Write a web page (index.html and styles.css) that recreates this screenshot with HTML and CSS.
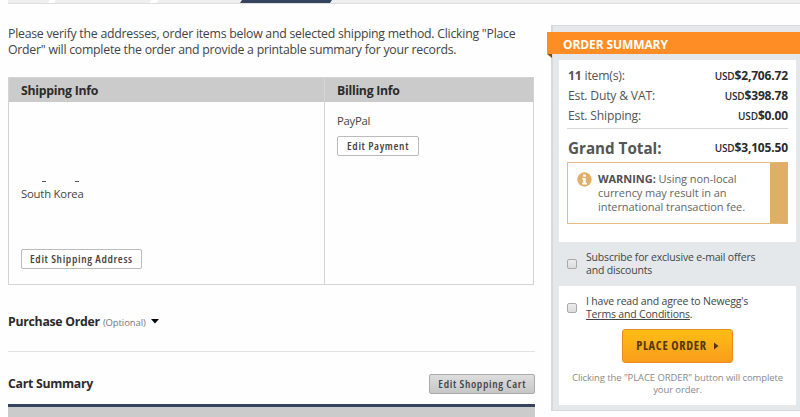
FILE: index.html
```
<!DOCTYPE html>
<html>
<head>
	<meta charset="UTF-8">
	<title>Place Order</title>
	<link rel="stylesheet" href="styles.css">
</head>
<body>
	<nav class="steps">
		<svg width="792" height="4" viewBox="0 0 792 4">
			<path class="step-bg" d="M0 0H792V3H0z"/>
			<path class="step-line" d="M0 3H792V4H0z"/>
			<path class="step-gap" d="M42 0L39 3H46L48 0zM144 0L141 3H148L151 0z"/>
			<path class="step-on" d="M234 0H324L322 3H232z"/>
		</svg>
	</nav>
	<div class="page">
		<main>
			<p class="intro">Please verify the addresses, order items below and selected shipping method. Clicking "Place<br>Order" will complete the order and provide a printable summary for your records.</p>
			<section class="info">
				<div class="shipping">
					<h2>Shipping Info</h2>
					<div class="content">
						<div class="marks"><i></i><i></i></div>
						<p>South Korea</p>
						<a class="btn">Edit Shipping Address</a>
					</div>
				</div>
				<div class="billing">
					<h2>Billing Info</h2>
					<div class="content">
						<p>PayPal</p>
						<a class="btn">Edit Payment</a>
					</div>
				</div>
			</section>
			<section class="purchase">
				<h3>Purchase Order</h3>
				<small>(Optional)</small>
				<svg width="8" height="5" viewBox="0 0 8 5"><path d="M0 0H8L4 4.5z"/></svg>
			</section>
			<section class="cart">
				<h3>Cart Summary</h3>
				<a class="btn grey">Edit Shopping Cart</a>
			</section>
			<div class="cart-table"></div>
		</main>
		<aside class="summary">
			<h2 class="ribbon">ORDER SUMMARY</h2>
			<div class="panel totals">
				<dl>
					<div><dt><b>11</b> item(s):</dt><dd><span>USD</span>$2,706.72</dd></div>
					<div><dt>Est. Duty &amp; VAT:</dt><dd><span>USD</span>$398.78</dd></div>
					<div><dt>Est. Shipping:</dt><dd><span>USD</span>$0.00</dd></div>
					<div class="grand"><dt>Grand Total:</dt><dd><span>USD</span>$3,105.50</dd></div>
				</dl>
				<div class="warning">
					<svg width="15" height="15" viewBox="0 0 15 15">
						<circle cx="7.5" cy="7.5" r="7.2" fill="#e0ae66"/>
						<path d="M6.2 2.4H8.8V4.8H6.2zM5.2 6H8.8V10.7H10V12.4H5V10.7H6.2V7.6H5.2z" fill="#fff"/>
					</svg>
					<p><b>WARNING:</b> Using non-local<br>currency may result in an<br>international transaction fee.</p>
				</div>
			</div>
			<label class="subscribe"><input type="checkbox"><span>Subscribe for exclusive e-mail offers<br>and discounts</span></label>
			<div class="panel order">
				<label><input type="checkbox"><span>I have read and agree to Newegg's<br><a>Terms and Conditions</a>.</span></label>
				<a class="place">PLACE ORDER <svg width="5" height="8" viewBox="0 0 5 8"><path d="M0 0.5L4.5 4L0 7.5z"/></svg></a>
				<p class="note">Clicking the "PLACE ORDER" button will complete<br>your order.</p>
			</div>
		</aside>
	</div>
</body>
</html>
```
FILE: styles.css
```
*{
	box-sizing: border-box;
}
body,h2,h3,p,dl,dd{
	margin: 0;
}
body{
	height: 417px;
	overflow: hidden;
	background: #fefefe;
	color: #444;
	font: 11.3px/16px "Open Sans", sans-serif;
}
svg{
	display: block;
	flex: none;
}
.steps{
	height: 4px;
	padding-left: 8px;
}
.step-bg{fill: #efefef}
.step-line{fill: #dedede}
.step-gap{fill: #fff}
.step-on{fill: #35455f}

.page{
	display: flex;
	gap: 16px;
	width: 812px;
	padding-left: 8px;
}
main{
	width: 527px;
	flex: none;
}
.intro{
	padding-top: 22px;
	font-size: 12.3px;
	letter-spacing: -0.25px;
	white-space: nowrap;
}
h2,h3{
	color: #2b2b2b;
	font-size: 12.3px;
	font-weight: 700;
	letter-spacing: -0.28px;
	white-space: nowrap;
}

/* addresses */
.info{
	display: flex;
	width: 526px;
	height: 208px;
	margin-top: 19px;
	border: 1px solid #d4d4d4;
}
.info h2{
	height: 24px;
	padding: 0 12px;
	background: #cbcbcb;
	line-height: 26px;
}
.shipping{
	width: 316px;
	border-right: 1px solid #d4d4d4;
}
.billing{
	flex: 1;
}
.content{
	padding: 0 12px;
	letter-spacing: -0.2px;
}
.shipping .content{
	padding-top: 79px;
}
.shipping .btn{
	margin-top: 47px;
}
.billing .content{
	padding-top: 11px;
}
.billing .content p{
	letter-spacing: -0.25px;
}
.billing .btn{
	margin-top: 7px;
	padding: 0 9px;
}
.marks{
	display: flex;
	gap: 29px;
	padding: 0 0 4px 21px;
}
.marks i{
	width: 4px;
	height: 1px;
	background: #555;
}
.btn{
	display: inline-block;
	height: 20px;
	padding: 0 8px;
	border: 1px solid #bbb;
	border-radius: 2px;
	background: #fff;
	color: #444;
	font-size: 11.3px;
	font-weight: 600;
	font-stretch: 75%;
	line-height: 18px;
	letter-spacing: 0.65px;
	white-space: nowrap;
	vertical-align: top;
}
.btn.grey{
	border-color: #aaa;
	background: linear-gradient(#dedede, #c6c6c6);
}

.purchase{
	display: flex;
	align-items: center;
	height: 67px;
	padding-top: 7px;
	border-bottom: 1px solid #e2e2e2;
}
.purchase small{
	margin: 2px 5px 0 3px;
	color: #777;
	font-size: 9.5px;
	letter-spacing: -0.1px;
}
.cart{
	display: flex;
	justify-content: space-between;
	align-items: center;
	height: 52px;
	padding-top: 11px;
}
.cart-table{
	height: 13px;
	border-top: 3px solid #35455f;
	background: #cbcbcb;
}

/* order summary */
.summary{
	width: 260px;
	height: 386px;
	margin-top: 21px;
	padding: 6px 6px;
	border: 1px solid #d5d9db;
	border-left-width: 2px;
	background: #e4e8eb;
}
.ribbon{
	position: relative;
	width: 264px;
	height: 22px;
	margin-left: -12px;
	padding-left: 16px;
	background: #fd8d24;
	color: #fff;
	font-size: 12px;
	line-height: 25px;
	letter-spacing: -0.1px;
}
.ribbon:after{
	content: "";
	position: absolute;
	top: 22px; left: 0;
	border-top: 4px solid #8a4a0c;
	border-left: 5px solid transparent;
}
.panel{
	width: 237px;
	padding: 0 8px;
	background: #fff;
}
.totals{
	height: 182px;
	margin-top: 6px;
	padding-top: 6px;
}
dl>div{
	display: flex;
	justify-content: space-between;
	align-items: center;
	height: 20px;
	padding-left: 1px;
	white-space: nowrap;
}
dt{
	font-size: 12.2px;
	letter-spacing: -0.2px;
	color: #555;
}
dd{
	color: #2b2b2b;
	font-size: 12px;
	font-weight: 700;
	letter-spacing: -0.15px;
}
dd span{
	font-size: 10px;
	font-weight: 600;
}
dl .grand{
	height: 38px;
	margin-top: 2px;
	border-top: 1px solid #d8d8d8;
}
.grand dt{
	font-size: 15.2px;
	font-weight: 700;
	letter-spacing: 0;
}
.warning{
	display: flex;
	gap: 6px;
	height: 62px;
	margin-top: -4px;
	padding: 9px 0 0 9px;
	border: 1px solid #e6be85;
	border-right: 18px solid #e0ae66;
}
.warning p{
	color: #666;
	font-size: 11px;
	line-height: 14px;
	letter-spacing: -0.05px;
	white-space: nowrap;
}
.warning b{
	color: #505050;
}
label{
	display: flex;
	align-items: center;
	font-size: 10.5px;
	line-height: 13px;
	letter-spacing: -0.18px;
	white-space: nowrap;
}
input{
	appearance: none;
	flex: none;
	width: 10px;
	height: 10px;
	margin: 0 9px 0 0;
	border: 1px solid #aaa;
	border-radius: 2px;
	background: linear-gradient(#ececec, #dcdcdc);
}
.subscribe{
	height: 44px;
	padding: 0 0 1px 8px;
}
.order{
	height: 119px;
	padding-top: 9px;
}
.order a{
	text-decoration: underline;
}
.order .place{
	display: flex;
	align-items: center;
	justify-content: center;
	gap: 7px;
	width: 111px;
	height: 34px;
	margin: 8px 0 0 55px;
	border: 1px solid #ec8a22;
	border-radius: 3px;
	background: linear-gradient(#fdbd14, #f99d1c);
	color: #54370a;
	fill: #54370a;
	font-size: 12.3px;
	font-weight: 700;
	font-stretch: 75%;
	letter-spacing: 0.7px;
	text-decoration: none;
	white-space: nowrap;
}
.note{
	margin-top: 9px;
	color: #8a8a8a;
	font-size: 9.5px;
	line-height: 12px;
	letter-spacing: -0.1px;
	text-align: center;
	white-space: nowrap;
}
```
